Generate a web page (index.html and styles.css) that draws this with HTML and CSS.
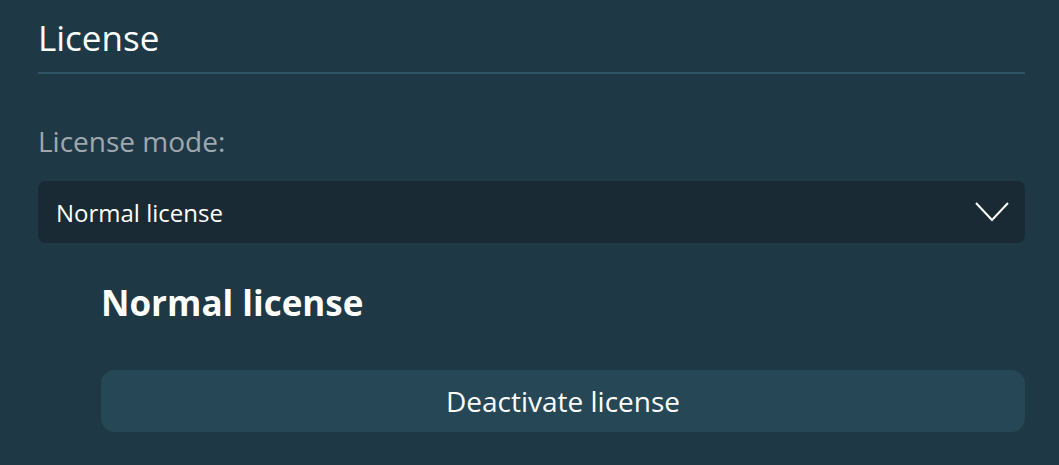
FILE: index.html
```html
<!DOCTYPE html>
<html>
<head>
<meta charset="utf-8">
<link rel="stylesheet" href="styles.css">
</head>
<body>
<div class="page">
  <h1 class="title">License</h1>
  <div class="rule"></div>
  <div class="label">License mode:</div>
  <div class="select">
    <span class="select-text">Normal license</span>
    <svg class="chevron" width="36" height="22" viewBox="0 0 36 22"><polyline points="2,2 18,19 34,2" fill="none" stroke="#ffffff" stroke-width="2"/></svg>
  </div>
  <div class="detail">
    <div class="detail-title">Normal license</div>
    <button class="btn">Deactivate license</button>
  </div>
</div>
</body>
</html>
```
FILE: styles.css
```css
html, body {
  margin: 0;
  padding: 0;
  background: #1e3846;
  font-family: "Open Sans", "Noto Sans", sans-serif;
  color: #ffffff;
}
.page {
  padding: 14px 34px 0 38px;
  display: flex;
  flex-direction: column;
}
.title {
  margin: 0;
  font-weight: 400;
  font-size: 35px;
  line-height: 48px;
}
.rule {
  height: 2px;
  background: #2f5565;
  margin-top: 10px;
}
.label {
  margin-top: 49px;
  font-size: 28px;
  line-height: 36px;
  color: #a0a8ad;
}
.select {
  margin-top: 22px;
  height: 62px;
  border-radius: 8px;
  background: #192a34;
  display: flex;
  align-items: center;
  justify-content: space-between;
  padding: 0 15px 0 18px;
}
.select-text {
  font-size: 24px;
}
.chevron {
  display: block;
}
.detail {
  padding-left: 63px;
  display: flex;
  flex-direction: column;
}
.detail-title {
  margin-top: 38px;
  font-size: 35px;
  font-weight: 700;
  line-height: 44px;
}
.btn {
  margin-top: 45px;
  height: 62px;
  border: none;
  border-radius: 14px;
  background: #264856;
  color: #ffffff;
  font-family: inherit;
  font-size: 28px;
}
```
